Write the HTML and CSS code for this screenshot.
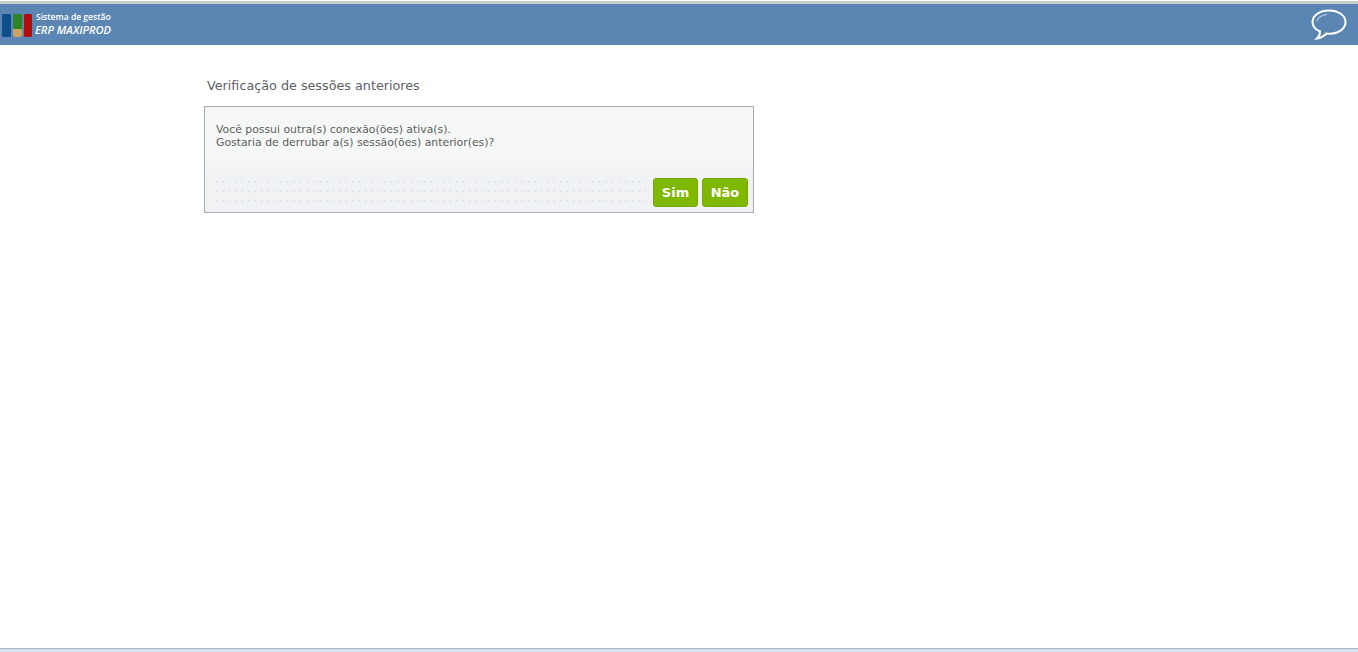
FILE: index.html
```html
<!DOCTYPE html>
<html lang="pt-BR">
<head>
<meta charset="utf-8">
<title>ERP MAXIPROD</title>
<link rel="stylesheet" href="styles.css">
</head>
<body>
<div class="page">
  <header class="topbar">
    <div class="brand">
      <svg class="logo" width="32" height="25" viewBox="0 0 32 25">
        <path d="M2 1h7l1 1v21l-1 1H2l-1-1V2Z" fill="#0f4c8a"/>
        <path d="M13 1h7l1 1v14H12V2Z" fill="#2f8423"/>
        <path d="M12 16h9v6l-1 2h-7l-1-2Z" fill="#c9a45c"/>
        <path d="M24 1h6l1 1v21l-1 1h-6l-1-1V2Z" fill="#b00d0d"/>
      </svg>
      <div class="brand-text">
        <span class="brand-top">Sistema de gestão</span>
        <span class="brand-name">ERP MAXIPROD</span>
      </div>
    </div>
    <svg class="chat" width="36" height="32" viewBox="0 0 36 32" fill="none" stroke="#fff">
      <path d="M18 1.500C8.500 1.500 1.500 6.500 1.500 13c0 4 3 7.500 7.500 9.500 0 2.500-1 5-3 7 3.500-.5 7-2.500 9.500-5 1 .1 2 .2 3 .2 9 0 16-5 16-11.700S27 1.500 18 1.500Z" stroke-width="2"/>
      <path d="M6 12c1-3.500 5-6 10-6.500" stroke-width="1.200" stroke-opacity=".6"/>
    </svg>
  </header>
  <main class="content">
    <h1 class="title">Verificação de sessões anteriores</h1>
    <section class="box">
      <p class="message">Você possui outra(s) conexão(ões) ativa(s).<br>Gostaria de derrubar a(s) sessão(ões) anterior(es)?</p>
      <div class="actions">
        <button class="btn" type="button">Sim</button>
        <button class="btn" type="button">Não</button>
      </div>
    </section>
  </main>
  <footer class="bottombar"></footer>
</div>
</body>
</html>
```
FILE: styles.css
```css
* { box-sizing: border-box; }
html, body { margin: 0; height: 100%; background: #fff; overflow: hidden; }
body { font-family: "DejaVu Sans", Verdana, sans-serif; }
.page { height: 652px; display: flex; flex-direction: column; padding-top: 1px; }
.topbar {
  height: 44px;
  flex: none;
  border-top: 3px solid #c9cccf;
  background: #5b86b4;
  display: flex;
  align-items: center;
  justify-content: space-between;
  padding: 0 11px 0 1px;
}
.brand { display: flex; align-items: center; gap: 2px; }
.logo { display: block; margin-top: 1px; }
.brand-text { display: flex; flex-direction: column; font-family: "Open Sans", sans-serif; color: #fff; margin-top: -2px; }
.brand-top { font-size: 8.550px; font-weight: 600; line-height: 11px; padding-left: 1px; }
.brand-name { font-size: 11.100px; font-style: italic; font-weight: 600; line-height: 13px; }
.chat { display: block; margin-top: 1px; }
.content { flex: 1; padding: 32px 0 0 204px; }
.title { margin: 0 0 12px 3px; font-size: 12.760px; font-weight: 400; line-height: 17px; color: #5b6068; }
.box {
  width: 550px;
  height: 107px;
  border: 1px solid #a5acb3;
  background: linear-gradient(#f5f7f6 0, #f6f8f7 45%, #f0f2f4 62%, #f1f2f4 100%);
  position: relative;
  display: flex;
  flex-direction: column;
  justify-content: space-between;
  padding: 16px 5px 5px 11px;
}
.box::before {
  content: "";
  position: absolute;
  left: 8px; right: 105px; bottom: 4px; height: 29px;
  background: radial-gradient(circle, #ccd4e0 0.6px, transparent 0.8px) 0 -2px / 6.500px 9.500px;
}
.message { margin: 0; font-size: 10.850px; line-height: 13px; color: #5a5f5a; }
.actions { display: flex; justify-content: flex-end; gap: 4px; position: relative; }
.btn {
  width: 45px;
  height: 29px;
  padding: 0;
  border: 1px solid #79a800;
  border-radius: 3px;
  background: #7fb800;
  color: #fff;
  font-family: "DejaVu Sans", Verdana, sans-serif;
  font-size: 13px;
  font-weight: 700;
}
.btn + .btn { width: 46px; }
.bottombar { height: 4px; flex: none; border-top: 1px solid #a9b6c2; background: #d6e2f0; }
```
